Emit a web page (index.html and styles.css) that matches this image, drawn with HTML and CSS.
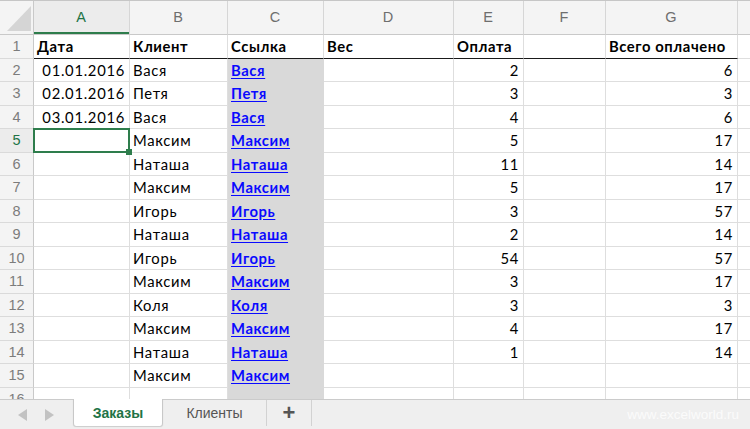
FILE: index.html
```html
<!DOCTYPE html>
<html lang="ru">
  <head>
    <meta charset="UTF-8" />
    <meta name="viewport" content="width=device-width, initial-scale=1.0" />
    <link rel="stylesheet" href="styles.css">
    <title>Заказы</title>
  </head>
  <body>
    <div class="sheet" id="sheet"></div>

    <div class="tabs">
      <div class="nav">
        <span class="arrow left"></span>
        <span class="arrow right"></span>
      </div>
      <div class="tab active">Заказы</div>
      <div class="tab">Клиенты</div>
      <div class="tab plus">+</div>
      <div class="watermark">www.excelworld.ru</div>
    </div>

    <script>
      // последний столбец виден только краем, буква не попадает в кадр
      const cols = ["A", "B", "C", "D", "E", "F", "G", ""];
      // дата, клиент, вес, оплата, всего
      const rows = [
        ["01.01.2016", "Вася", "", "2", "6"],
        ["02.01.2016", "Петя", "", "3", "3"],
        ["03.01.2016", "Вася", "", "4", "6"],
        ["", "Максим", "", "5", "17"],
        ["", "Наташа", "", "11", "14"],
        ["", "Максим", "", "5", "17"],
        ["", "Игорь", "", "3", "57"],
        ["", "Наташа", "", "2", "14"],
        ["", "Игорь", "", "54", "57"],
        ["", "Максим", "", "3", "17"],
        ["", "Коля", "", "3", "3"],
        ["", "Максим", "", "4", "17"],
        ["", "Наташа", "", "1", "14"],
        ["", "Максим", "", "", ""],
        ["", "", "", "", ""],
      ];

      const sheet = document.getElementById("sheet");
      let html = `<div class="cell corner"><svg width="34" height="34" viewBox="0 0 34 34"><polygon points="7,30 31,5 31,30" fill="#d5d5d5"/></svg></div>`;
      cols.forEach((c) => {
        html += `<div class="cell hd ${c === "A" ? "on" : ""}">${c}</div>`;
      });

      html += `<div class="cell rh">1</div>
        <div class="cell top b">Дата</div>
        <div class="cell top b">Клиент</div>
        <div class="cell top b">Ссылка</div>
        <div class="cell top b">Вес</div>
        <div class="cell top b">Оплата</div>
        <div class="cell top"></div>
        <div class="cell top b">Всего оплачено</div>
        <div class="cell"></div>`;

      rows.forEach((r, i) => {
        const n = i + 2;
        const link = r[1] ? `<a href="#">${r[1]}</a>` : "";
        html += `<div class="cell rh ${n === 5 ? "on" : ""}">${n}</div>
          <div class="cell num ${n === 5 ? "sel" : ""}">${r[0]}</div>
          <div class="cell">${r[1]}</div>
          <div class="cell link">${link}</div>
          <div class="cell">${r[2]}</div>
          <div class="cell num">${r[3]}</div>
          <div class="cell"></div>
          <div class="cell num">${r[4]}</div>
          <div class="cell"></div>`;
      });
      sheet.innerHTML = html;
    </script>
  </body>
</html>
```

FILE: styles.css
```css
body {
  margin: 0;
  background-color: #fff;
  color: #000;
  font-family: Lato, "Noto Sans", sans-serif;
  overflow: hidden;
}
.sheet {
  display: grid;
  grid-template-columns: 34px 96px 98px 96px 130px 70px 82px 132px 100px;
  grid-template-rows: 34px;
  grid-auto-rows: 23.5px;
  width: 750px;
  height: 399px;
  overflow: hidden;
  border-top: 1px solid #c6c6c6;
  box-sizing: border-box;
}
.cell {
  position: relative;
  box-sizing: border-box;
  padding: 0 4px 0 3px;
  border-right: 1px solid #dedede;
  border-bottom: 1px solid #dedede;
  font-size: 14.8px;
  letter-spacing: 0.7px;
  line-height: 22.5px;
  white-space: nowrap;
}
.cell.num {
  text-align: right;
}
.cell.b {
  font-weight: 700;
  letter-spacing: 0.6px;
}
.cell.top {
  border-bottom-color: #1a1a1a;
}
.corner {
  padding: 0;
  background-color: #f4f4f4;
  border-color: #c9c9c9;
}
.corner svg {
  display: block;
}
.hd {
  background-color: #f4f4f4;
  color: #6e6e6e;
  font-family: "Liberation Sans", Arial, sans-serif;
  font-size: 14.5px;
  letter-spacing: 0;
  text-align: center;
  line-height: 33px;
  border-right-color: #d6d6d6;
  border-bottom-color: #c9c9c9;
}
.hd.on {
  color: #217346;
  background-color: #ececec;
  box-shadow: inset 0 -2px 0 #2e7d4c;
}
.rh {
  padding: 0;
  background-color: #f4f4f4;
  color: #7c7c7c;
  font-family: "Liberation Sans", Arial, sans-serif;
  font-size: 14.5px;
  letter-spacing: 0;
  text-align: center;
  border-right-color: #c9c9c9;
  border-bottom-color: #dadada;
}
.rh.on {
  color: #217346;
  background-color: #ececec;
}
.link {
  background-color: #d9d9d9;
  border-color: #d9d9d9;
  padding-left: 3px;
}
.link a {
  color: #0a0aff;
  font-weight: 700;
  letter-spacing: 0.6px;
  text-decoration: underline;
  text-underline-offset: 2px;
}
.sel::after {
  content: "";
  position: absolute;
  top: -1px;
  left: -1px;
  right: -1px;
  bottom: -1px;
  border: 2px solid #2e7d4c;
}
.sel::before {
  content: "";
  position: absolute;
  right: -3px;
  bottom: -3px;
  width: 6px;
  height: 6px;
  background-color: #2e7d4c;
  z-index: 2;
}

/* вкладки листов */
.tabs {
  display: flex;
  height: 30px;
  box-sizing: border-box;
  background-color: #efefef;
  border-top: 1px solid #cbcbcb;
  font-family: "Liberation Sans", Arial, sans-serif;
  font-size: 14px;
}
.nav {
  width: 73px;
  display: flex;
  align-items: center;
  padding-left: 18px;
  gap: 18px;
  box-sizing: border-box;
}
.arrow {
  width: 0;
  height: 0;
  border-top: 6px solid transparent;
  border-bottom: 6px solid transparent;
}
.arrow.left {
  border-right: 9px solid #c2c2c2;
}
.arrow.right {
  border-left: 9px solid #c2c2c2;
}
.tab {
  display: flex;
  align-items: center;
  justify-content: center;
  width: 104px;
  color: #555;
  border-right: 1px solid #d2d2d2;
  box-sizing: border-box;
  margin-bottom: 3px;
}
.tab.active {
  width: 90px;
  margin-top: -1px;
  background-color: #fff;
  color: #217346;
  font-weight: 700;
  border-left: 1px solid #c8c8c8;
  border-right: 1px solid #c8c8c8;
  border-radius: 0 0 3px 3px;
  box-shadow: 0 1px 1px rgba(0, 0, 0, 0.15);
}
.tab.plus {
  width: 45px;
  font-size: 22px;
  font-weight: 700;
  color: #555;
}
.watermark {
  margin-left: auto;
  align-self: center;
  padding-right: 11px;
  color: #fbfbfb;
  font-size: 13.5px;
}
```
